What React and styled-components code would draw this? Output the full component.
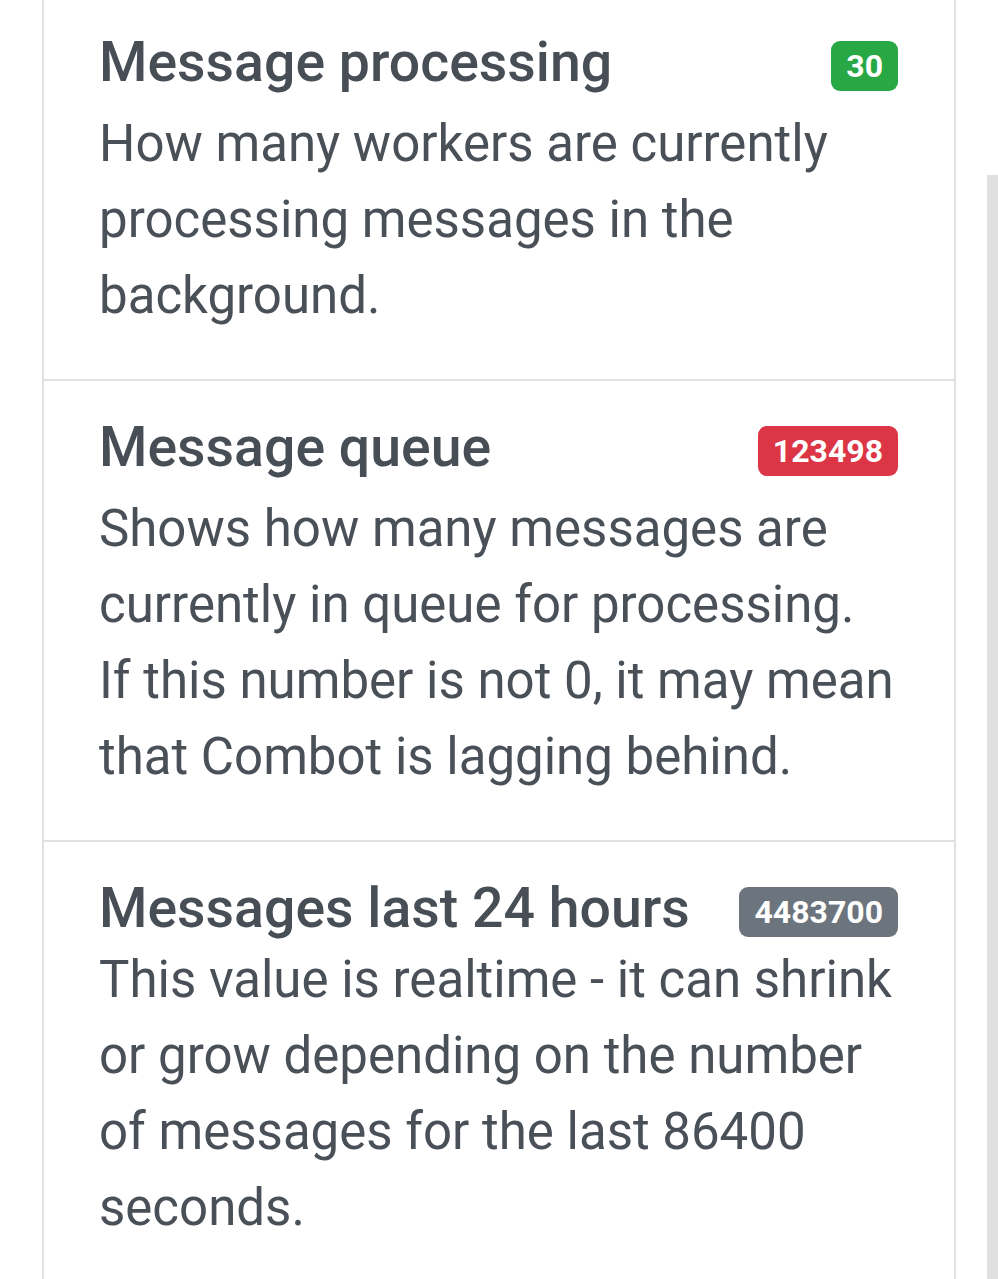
import styled, { createGlobalStyle } from "styled-components";

const GlobalStyle = createGlobalStyle`
  html, body {
    margin: 0;
    height: 100%;
    overflow: hidden;
    background: #fff;
  }
  body {
    font-family: Roboto, "Noto Sans", sans-serif;
    color: #495057;
  }
  #root {
    height: 100%;
  }
`;

const Page = styled.div`
  display: flex;
  height: 100%;
`;

const ListGroup = styled.div`
  width: 914px;
  margin-left: 42px;
  margin-top: -4px;
  border-left: 2px solid #e1e1e1;
  border-right: 2px solid #e1e1e1;
  box-sizing: border-box;
`;

const Item = styled.div`
  padding: 33px 56px 45px 55px;
  border-bottom: 2px solid #e1e1e1;
`;

const TitleRow = styled.div`
  display: flex;
  align-items: center;
  justify-content: space-between;
  margin-bottom: ${(p) => (p.$tight ? "0" : "10px")};
`;

const Title = styled.h5`
  margin: 0;
  font-size: 55.4px;
  line-height: 67px;
  font-weight: 500;
  color: #474e55;
`;

const colors = {
  success: "#28a745",
  danger: "#dc3545",
  secondary: "#6c757d",
};

const Badge = styled.span`
  display: inline-flex;
  align-items: center;
  height: 50px;
  margin-top: 6px;
  padding: 0 15px;
  box-sizing: border-box;
  border-radius: 9px;
  background: ${(p) => colors[p.$variant]};
  color: #fff;
  font-size: 32px;
  font-weight: 700;
`;

const Text = styled.p`
  margin: 0;
  font-size: 51px;
  line-height: 76px;
  color: #495057;
`;

const ScrollThumb = styled.div`
  width: 11px;
  margin-left: 31px;
  margin-top: 175px;
  background: #e0e0e0;
`;

const stats = [
  {
    title: "Message processing",
    value: "30",
    variant: "success",
    text: "How many workers are currently processing messages in the background.",
  },
  {
    title: "Message queue",
    value: "123498",
    variant: "danger",
    text: "Shows how many messages are currently in queue for processing. If this number is not 0, it may mean that Combot is lagging behind.",
  },
  {
    title: "Messages last 24 hours",
    value: "4483700",
    variant: "secondary",
    tight: true,
    text: "This value is realtime - it can shrink or grow depending on the number of messages for the last 86400 seconds.",
  },
];

const App = () => {
  return (
    <>
      <GlobalStyle />
      <Page>
        <ListGroup>
          {stats.map((s) => (
            <Item key={s.title}>
              <TitleRow $tight={s.tight}>
                <Title>{s.title}</Title>
                <Badge $variant={s.variant}>{s.value}</Badge>
              </TitleRow>
              <Text>{s.text}</Text>
            </Item>
          ))}
        </ListGroup>
        <ScrollThumb />
      </Page>
    </>
  );
};

export default App;
